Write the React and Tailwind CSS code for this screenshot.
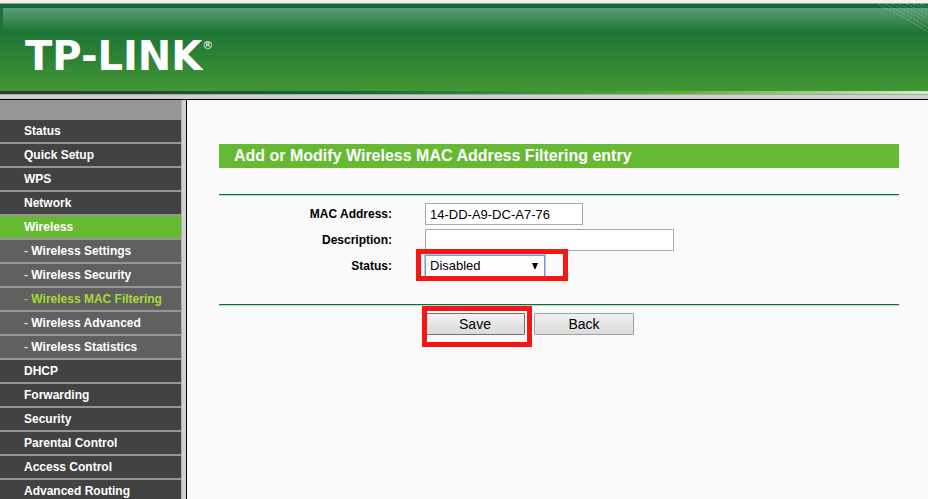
import React, { useState } from 'react';

const menuItems = [
    { label: 'Status' },
    { label: 'Quick Setup' },
    { label: 'WPS' },
    { label: 'Network' },
    {
        label: 'Wireless',
        children: [
            'Wireless Settings',
            'Wireless Security',
            'Wireless MAC Filtering',
            'Wireless Advanced',
            'Wireless Statistics',
        ],
    },
    { label: 'DHCP' },
    { label: 'Forwarding' },
    { label: 'Security' },
    { label: 'Parental Control' },
    { label: 'Access Control' },
    { label: 'Advanced Routing' },
];

const Header = () => (
    <header className="shrink-0">
        <div className="h-[3px] bg-[#f0f0f0]" />
        <div className="relative border-t border-[#a0a0a0] bg-[#0b6a38] pt-1">
            <div className="h-[83px] bg-linear-to-b from-[#1c7535] from-30% to-[#429632] pl-[3px]">
                <div className="h-6 bg-linear-to-b from-[#5a9c78] to-[#1c7535]" />
                <h1 className="flex items-start pl-[22px] font-['DejaVu_Sans'] text-[40px] leading-[48px] font-bold text-white">
                    TP-LINK
                    <span className="pt-2 text-[11px] leading-3 font-normal">®</span>
                </h1>
            </div>
            <svg className="absolute top-0 right-0 h-8 w-14" viewBox="0 0 56 32" fill="none" stroke="#a9d0b5" strokeOpacity="0.45" strokeDasharray="3 1">
                <path d="M6 0Q32 13 56 28M13 0Q36 11 56 24M20 0Q40 9 56 19M27 0Q44 8 56 15M34 0Q46 5 56 11M41 0Q50 3 56 7M48 0L56 3" />
            </svg>
        </div>
        <div className="h-[3px] bg-[linear-gradient(to_right,#3b3335,#0b6a3c_37%,#5ab032_73%,#d5ecc5)]" />
        <div className="h-[6px] border-t border-b border-t-[#a9a9a9] border-b-black bg-[#d0d0d0]" />
    </header>
);

const Sidebar = ({ activeSub, onSelect }) => (
    <nav className="w-[187px] shrink-0 overflow-hidden border-r border-black bg-[#d0d0d0] pr-1">
        <ul className="flex min-h-full flex-col gap-0.5 border-r border-[#b0b0b0] bg-[#969696] pt-5 text-xs leading-[22px] font-bold text-white">
            {menuItems.map((item) => (
                <li key={item.label}>
                    <a href="#" className={`block pl-6 ${item.children ? 'bg-[#66ba33]' : 'bg-[#424242]'}`}>
                        {item.label}
                    </a>
                    {item.children && (
                        <ul className="flex flex-col gap-0.5 pt-0.5">
                            {item.children.map((child) => (
                                <li key={child}>
                                    <a
                                        href="#"
                                        onClick={() => onSelect(child)}
                                        className={`block bg-[#606060] pl-6 ${child === activeSub ? 'text-[#a5dc32]' : ''}`}
                                    >
                                        <span className="font-normal">- </span>
                                        {child}
                                    </a>
                                </li>
                            ))}
                        </ul>
                    )}
                </li>
            ))}
        </ul>
    </nav>
);

const Divider = () => <hr className="h-0.5 border-t border-b border-t-[#0f6f3a] border-b-[#b5d8c2]" />;

const Row = ({ id, label, children }) => (
    <div className="flex h-[26px] items-start">
        <label htmlFor={id} className="w-[173px] shrink-0 text-right text-xs leading-[22px] font-bold">
            {label}
        </label>
        <div className="ml-[33px]">{children}</div>
    </div>
);

// red frame drawn around the controls the user has to click
const Highlight = ({ className }) => (
    <span className={`pointer-events-none absolute border-5 border-[#f51616] ${className}`} />
);

const FilterForm = () => {
    const [mac, setMac] = useState('14-DD-A9-DC-A7-76');
    const [description, setDescription] = useState('');
    const [status, setStatus] = useState('Disabled');

    return (
        <form className="max-w-[680px]" onSubmit={(e) => e.preventDefault()}>
            <h2 className="mb-[26px] bg-[#66ba33] pl-[15px] text-base leading-6 font-bold text-white">
                Add or Modify Wireless MAC Address Filtering entry
            </h2>
            <Divider />
            <div className="pt-[7px] pb-[23px]">
                <Row id="mac" label="MAC Address:">
                    <input
                        id="mac"
                        type="text"
                        value={mac}
                        onChange={(e) => setMac(e.target.value)}
                        className="block h-[22px] w-[158px] border border-[#a9a9a9] bg-white px-1 text-[13px]"
                    />
                </Row>
                <Row id="description" label="Description:">
                    <input
                        id="description"
                        type="text"
                        value={description}
                        onChange={(e) => setDescription(e.target.value)}
                        className="block h-[22px] w-[249px] border border-[#a9a9a9] bg-white px-1 text-[13px]"
                    />
                </Row>
                <Row id="status" label="Status:">
                    <div className="relative">
                        <select
                            id="status"
                            value={status}
                            onChange={(e) => setStatus(e.target.value)}
                            className="block h-[22px] w-[120px] appearance-none border border-[#6f97dc] bg-white px-1 text-[13px] ring-1 ring-[#b4cbf5]"
                        >
                            <option>Enabled</option>
                            <option>Disabled</option>
                        </select>
                        <svg className="pointer-events-none absolute top-2 right-[7px] h-[6px] w-[6px]" viewBox="0 0 6 6">
                            <path d="M0 0H6L3.5 6H2.5Z" fill="#000" />
                        </svg>
                        <Highlight className="-top-[6px] -left-[9px] h-8 w-[152px]" />
                    </div>
                </Row>
            </div>
            <Divider />
            <div className="flex gap-[9px] pt-[7px] pl-[206px] text-sm">
                <div className="relative">
                    <button
                        type="submit"
                        className="block h-[22px] w-[100px] rounded-[1px] border border-[#707070] bg-linear-to-b from-[#f2f2f2] to-[#dadada] leading-5"
                    >
                        Save
                    </button>
                    <Highlight className="-top-[7px] -left-[3px] h-[41px] w-[110px]" />
                </div>
                <button
                    type="button"
                    className="block h-[22px] w-[100px] rounded-[1px] border border-[#a0a0a0] bg-linear-to-b from-[#f2f2f2] to-[#dadada] leading-5"
                >
                    Back
                </button>
            </div>
        </form>
    );
};

const App = () => {
    const [activeSub, setActiveSub] = useState('Wireless MAC Filtering');

    return (
        <div className="flex h-screen flex-col overflow-hidden bg-[#fafafa] font-['Liberation_Sans',sans-serif] text-black">
            <Header />
            <div className="flex min-h-0 flex-1">
                <Sidebar activeSub={activeSub} onSelect={setActiveSub} />
                <main className="flex-1 pt-11 pr-6 pl-8">
                    <FilterForm />
                </main>
            </div>
        </div>
    );
};

export default App;
